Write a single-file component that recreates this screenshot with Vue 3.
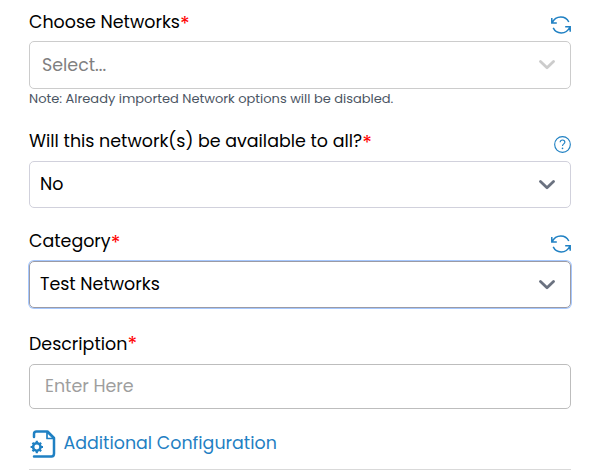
<script setup>
import { ref } from 'vue'

const description = ref('')
const fields = [
  { id: 'networks', label: 'Choose Networks', value: 'Select...', placeholder: true, icon: 'refresh', note: 'Note: Already imported Network options will be disabled.' },
  { id: 'available', label: 'Will this network(s) be available to all?', value: 'No', icon: 'help' },
  { id: 'category', label: 'Category', value: 'Test Networks', icon: 'refresh' },
]
</script>

<template>
  <form class="form">
    <section v-for="f in fields" :key="f.id" class="field" :class="f.id">
      <div class="head">
        <label class="label"><span class="text">{{ f.label }}</span><span class="star">*</span></label>
        <svg v-if="f.icon === 'refresh'" class="refresh" viewBox="0 0 20 18">
          <path d="M.8 2v5h5M1.2 6.600C2.800 3.200 6 1 9.800 1c3.500 0 6.400 1.800 8 5M19.200 15.800v-5h-5M18.800 11.200C17.200 14.700 14 16.900 10.200 16.900c-3.500 0-6.400-1.800-8-5" />
        </svg>
        <svg v-else class="help" viewBox="0 0 18 18">
          <circle cx="9" cy="9" r="8.300" />
          <path d="M6.500 6.700c0-1.500 1-2.500 2.500-2.500s2.500 1 2.500 2.300c0 1.800-2.500 2-2.500 4.100" />
          <circle class="dot" cx="9" cy="13" r=".9" />
        </svg>
      </div>
      <div class="select">
        <span class="value" :class="{ placeholder: f.placeholder }">{{ f.value }}</span>
        <svg class="chevron" viewBox="0 0 16 10"><path d="M1.500 1.500L8 7.700l6.500-6.200" /></svg>
      </div>
      <p v-if="f.note" class="note">{{ f.note }}</p>
    </section>

    <section class="field description">
      <div class="head">
        <label class="label" for="desc"><span class="text">Description</span><span class="star">*</span></label>
      </div>
      <input id="desc" v-model="description" class="input" placeholder="Enter Here" />
    </section>

    <div class="additional">
      <svg class="doc" viewBox="0 0 26 28">
        <path class="line" d="M4 7V4Q4 1.500 6.500 1.500H17.500l6.500 6.500v15.500Q24 26.500 21.500 26.500H4" />
        <path class="fold" d="M17 2v6.500h7z" />
        <circle class="gear" cx="6.800" cy="17" r="3.700" />
        <path class="teeth" d="M6.800 13.500v-2.700M6.800 20.500v2.700M3.300 17H.6M10.300 17H13M4.300 14.500L2.500 12.700M9.300 19.500l1.800 1.800M9.300 14.500l1.800-1.800M4.300 19.500l-1.800 1.800" />
      </svg>
      <span class="link">Additional Configuration</span>
    </div>
  </form>
</template>

<style>
body {
  background: #fff;
}
</style>

<style scoped>
.form {
  box-sizing: border-box;
  width: 542px;
  margin-left: 29px;
  font-family: Poppins, Inter, "Open Sans", sans-serif;
  font-size: 17.45px;
  line-height: 26px;
  color: #000;
}
.field {
  display: flex;
  flex-direction: column;
}
.head {
  box-sizing: border-box;
  display: flex;
  justify-content: space-between;
  align-items: flex-start;
  white-space: nowrap;
}
.label { display: flex; }
.networks { height: 128px; }
.networks .head { height: 41px; padding-top: 9px; }
.available .head { height: 33px; }
.category .head { height: 53px; padding-top: 20px; }
.description .head { height: 56px; padding-top: 23px; }
.star { color: #f00; font-size: 20px; line-height: 30px; }
.description .star { line-height: 26px; }
.select {
  box-sizing: border-box;
  height: 47px;
  border: 1px solid #d1d1dc;
  border-radius: 5px;
  padding: 0 15px 0 10px;
  display: flex;
  align-items: center;
  justify-content: space-between;
}
.value { padding-bottom: 1px; }
.networks .select { height: 48px; border-color: #ccc; padding-left: 12px; }
.networks .value { padding-bottom: 0; }
.category .select { border-color: #9b9ba5; box-shadow: 0 0 0 1px #a6c8ff; }
.placeholder { color: #808080; }
.chevron {
  width: 16px;
  height: 10px;
  fill: none;
  stroke: #6b7280;
  stroke-width: 2.800;
  stroke-linejoin: round;
  stroke-linecap: round;
}
.networks .chevron { stroke: #ccc; }
.refresh, .help {
  fill: none;
  stroke: #1f80c3;
  stroke-width: 1.500;
}
.refresh { width: 20px; height: 18px; margin-top: 7px; }
.help { width: 17px; height: 17px; margin-top: 8px; stroke-width: 1.200; }
.help .dot { fill: #1f80c3; stroke: none; }
.note {
  margin: 0;
  font-size: 13px;
  line-height: 20px;
  color: #4b5563;
  white-space: nowrap;
}
.input {
  box-sizing: border-box;
  height: 45px;
  width: 100%;
  border: 1px solid #bdbdbd;
  border-radius: 5px;
  padding: 0 15px 2px;
  font: inherit;
  outline: none;
}
.input::placeholder { color: #9e9e9e; opacity: 1; }
.additional {
  box-sizing: border-box;
  height: 61px;
  border-bottom: 1px solid #d9d9d9;
  padding-top: 21px;
  display: flex;
  align-items: flex-start;
  color: #1f80c3;
}
.doc { width: 26px; height: 28px; margin: 0 7.500px 0 1px; }
.doc path, .doc circle { fill: none; stroke: #1f80c3; stroke-width: 2.500; stroke-linecap: round; stroke-linejoin: round; }
.doc .fold { stroke-width: 1.700; }
.doc .teeth { stroke-width: 2.200; stroke-linecap: butt; }
</style>
